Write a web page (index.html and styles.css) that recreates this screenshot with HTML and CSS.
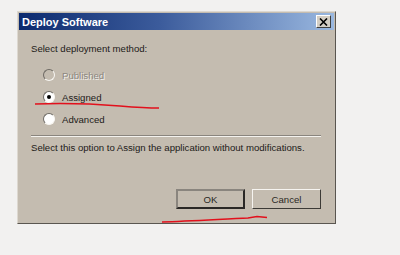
FILE: index.html
```html
<html>
  <head>
    <title>Deploy Software</title>
    <link rel="stylesheet" href="styles.css">
  </head>
  <body>
  <div class="dialog">
    <div class="titlebar">
      <span class="title">Deploy Software</span>
      <span class="closeBtn">
        <svg width="9" height="8" viewBox="0 0 9 8"><path d="M1 0.5 L8 7.5 M8 0.5 L1 7.5" stroke="#000" stroke-width="1.6"/></svg>
      </span>
    </div>
    <div class="body">
      <div class="prompt">Select deployment method:</div>
      <div class="options">
        <div class="option disabled"><span class="radio"></span><span>Published</span></div>
        <div class="option"><span class="radio checked"></span><span>Assigned</span></div>
        <div class="option"><span class="radio"></span><span>Advanced</span></div>
      </div>
      <div class="rule"></div>
      <div class="hint">Select this option to Assign the application without modifications.</div>
      <div class="buttons">
        <div class="btn default">OK</div>
        <div class="btn">Cancel</div>
      </div>
    </div>
  </div>
  <!-- red pen marks drawn over the screenshot -->
  <svg class="marks" width="400" height="255" viewBox="0 0 400 255">
    <path d="M35 104 C 60 103, 95 104, 120 106 S 150 108, 159 108" stroke="#e2101c" stroke-width="1.6" fill="none"/>
    <path d="M162 222 C 190 221, 225 219, 248 218 L 257 216.5 L 267 217.5" stroke="#e2101c" stroke-width="1.6" fill="none"/>
  </svg>
  </body>
</html>
```
FILE: styles.css
```css
body{
    margin: 0;
    background-color: #f2f1f0;
    font-family: "Liberation Sans", Arial, sans-serif;
    font-size: 9.6px;
    color: #1c1a18;
}
.dialog{
    margin: 11px 0 0 17px;
    width: 319px;
    height: 213px;
    box-sizing: border-box;
    background-color: #c4bcb0;
    border: 1px solid;
    border-color: #ddd8d0 #5a5650 #5a5650 #ddd8d0;
    padding: 1px;
    display: flex;
    flex-direction: column;
}
.titlebar{
    height: 17px;
    background: linear-gradient(to right, #0c2a6e, #3c5c9c 45%, #9ab8e0);
    display: flex;
    align-items: center;
    justify-content: space-between;
    padding: 0 3px 0 3px;
}
.title{
    color: #ffffff;
    font-weight: bold;
    font-size: 11px;
}
.closeBtn{
    width: 15px;
    height: 13px;
    box-sizing: border-box;
    background-color: #d4cec4;
    border: 1px solid;
    border-color: #ffffff #404040 #404040 #ffffff;
    display: flex;
    align-items: center;
    justify-content: center;
}
.body{
    flex: 1;
    padding: 13px 12px 0 12px;
    display: flex;
    flex-direction: column;
}
.prompt{
    height: 12px;
    line-height: 12px;
}
.options{
    margin-top: 14px;
    padding-left: 12px;
    display: flex;
    flex-direction: column;
    gap: 10px;
}
.option{
    display: flex;
    align-items: center;
    height: 12px;
    gap: 7px;
}
.option.disabled{
    color: #8c877f;
    text-shadow: 1px 1px 0 #f4f2ee;
}
.radio{
    width: 12px;
    height: 12px;
    box-sizing: border-box;
    border-radius: 50%;
    border: 1px solid;
    border-color: #6e6a64 #f8f6f2 #f8f6f2 #6e6a64;
    background-color: #ffffff;
    display: flex;
    align-items: center;
    justify-content: center;
}
.disabled .radio{
    background-color: #c4bcb0;
}
.radio.checked::after{
    content: "";
    width: 4px;
    height: 4px;
    border-radius: 50%;
    background-color: #000000;
}
.rule{
    margin-top: 10px;
    margin-right: 1px;
    border-top: 1px solid #8a857e;
    border-bottom: 1px solid #f4f2ee;
}
.hint{
    margin-top: 5px;
    height: 12px;
    line-height: 12px;
}
.buttons{
    margin-top: 35px;
    display: flex;
    justify-content: flex-end;
    gap: 7px;
    margin-right: 1px;
}
.btn{
    width: 69px;
    height: 20px;
    box-sizing: border-box;
    border: 1px solid;
    border-color: #f6f4f0 #3c3a36 #3c3a36 #f6f4f0;
    display: flex;
    align-items: center;
    justify-content: center;
    color: #2a2824;
}
.btn.default{
    border: 2px solid;
    border-color: #8a857e #2a2826 #2a2826 #8a857e;
}
.marks{
    position: absolute;
    left: 0;
    top: 0;
    pointer-events: none;
}
```
